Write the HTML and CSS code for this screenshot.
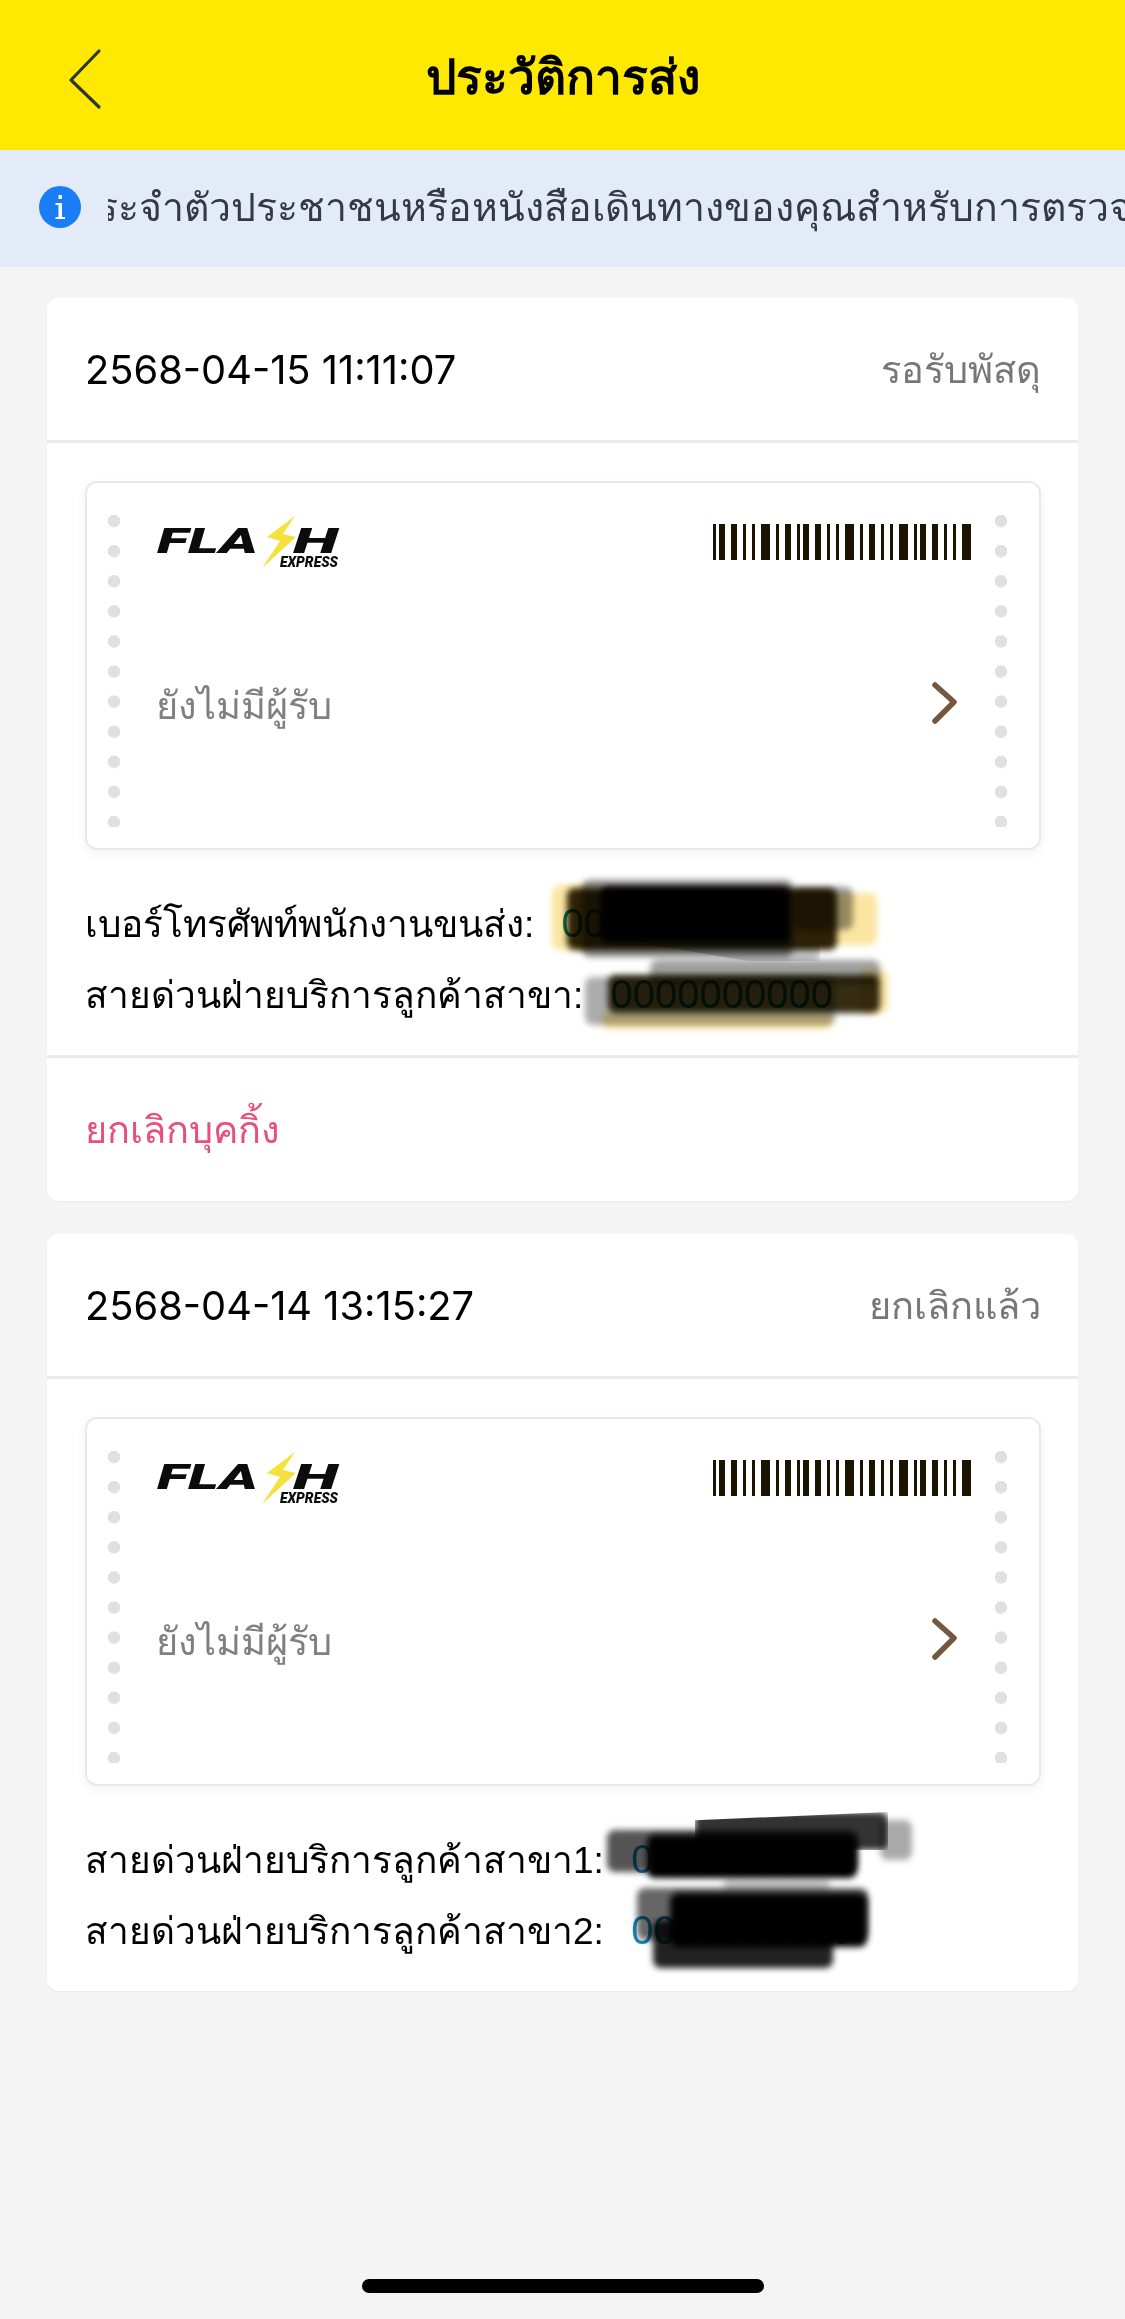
FILE: index.html
```html
<!DOCTYPE html>
<html lang="th">
<head>
    <meta charset="UTF-8">
    <meta name="viewport" content="width=device-width, initial-scale=1.0">
    <title>ประวัติการส่ง</title>
    <link rel="stylesheet" href="styles.css">
</head>
<body>
    <svg class="defs" width="0" height="0">
        <symbol id="logo" viewBox="0 0 184 56">
            <text class="logo-big" x="1" y="38" textLength="101" lengthAdjust="spacingAndGlyphs">FLA</text>
            <text class="logo-big" x="137" y="38" textLength="45" lengthAdjust="spacingAndGlyphs">H</text>
            <polygon points="139,1 111,22 124,26 106,53 140,22 127,19" fill="#f5e13c"/>
            <text class="logo-small" x="124" y="52" textLength="58" lengthAdjust="spacingAndGlyphs">EXPRESS</text>
        </symbol>
        <symbol id="barcode" viewBox="0 0 86 12">
            <path fill="#1a1400" d="M0 0h1v12h-1zM2 0h2v12h-2zM6 0h2v12h-2zM10 0h1v12h-1zM13 0h1v12h-1zM16 0h3v12h-3zM21 0h1v12h-1zM24 0h2v12h-2zM28 0h1v12h-1zM30 0h2v12h-2zM34 0h2v12h-2zM38 0h1v12h-1zM41 0h1v12h-1zM44 0h3v12h-3zM49 0h1v12h-1zM52 0h2v12h-2zM56 0h1v12h-1zM59 0h1v12h-1zM62 0h3v12h-3zM67 0h1v12h-1zM69 0h2v12h-2zM73 0h2v12h-2zM77 0h1v12h-1zM80 0h1v12h-1zM83 0h3v12h-3z"/>
        </symbol>
    </svg>

    <header class="topbar">
        <svg class="back" width="36" height="64" viewBox="0 0 36 64"><path d="M32 4 L4 33 L32 60" fill="none" stroke="#333" stroke-width="3.2" stroke-linecap="round" stroke-linejoin="round"/></svg>
        <h1>ประวัติการส่ง</h1>
    </header>

    <div class="notice">
        <svg class="info" width="42" height="42" viewBox="0 0 42 42">
            <circle cx="21" cy="21" r="21" fill="#1a7df5"/>
            <path d="M16.500 17h6.500v14h3v2h-9.500v-2h3v-12h-3z M19.500 9h3.500v4h-3.500z" fill="#fff"/>
        </svg>
        <div class="notice-clip"><span class="notice-text">บัตรประจำตัวประชาชนหรือหนังสือเดินทางของคุณสำหรับการตรวจสอบ</span></div>
    </div>

    <main class="list">
        <section class="card">
            <div class="card-head">
                <span class="time">2568-04-15 11:11:07</span>
                <span class="status">รอรับพัสดุ</span>
            </div>
            <div class="card-body">
                <div class="ticket">
                    <div class="dots"></div>
                    <div class="ticket-main">
                        <div class="ticket-top">
                            <svg class="logo"><use href="#logo"/></svg>
                            <svg class="barcode"><use href="#barcode"/></svg>
                        </div>
                        <div class="ticket-row">
                            <span class="receiver">ยังไม่มีผู้รับ</span>
                            <svg class="chevron" width="28" height="44" viewBox="0 0 28 44"><path d="M4 4 L23 21 L4 40" fill="none" stroke="#75563f" stroke-width="5.500" stroke-linecap="round" stroke-linejoin="round"/></svg>
                        </div>
                    </div>
                    <div class="dots"></div>
                </div>
                <div class="contacts">
                    <p>เบอร์โทรศัพท์พนักงานขนส่ง: <span class="phone teal">0000000000</span></p>
                    <p>สายด่วนฝ่ายบริการลูกค้าสาขา: <span class="phone teal">0000000000</span></p>
                </div>
            </div>
            <div class="card-foot">ยกเลิกบุคกิ้ง</div>
        </section>

        <section class="card">
            <div class="card-head">
                <span class="time">2568-04-14 13:15:27</span>
                <span class="status">ยกเลิกแล้ว</span>
            </div>
            <div class="card-body">
                <div class="ticket">
                    <div class="dots"></div>
                    <div class="ticket-main">
                        <div class="ticket-top">
                            <svg class="logo"><use href="#logo"/></svg>
                            <svg class="barcode"><use href="#barcode"/></svg>
                        </div>
                        <div class="ticket-row">
                            <span class="receiver">ยังไม่มีผู้รับ</span>
                            <svg class="chevron" width="28" height="44" viewBox="0 0 28 44"><path d="M4 4 L23 21 L4 40" fill="none" stroke="#75563f" stroke-width="5.500" stroke-linecap="round" stroke-linejoin="round"/></svg>
                        </div>
                    </div>
                    <div class="dots"></div>
                </div>
                <div class="contacts">
                    <p>สายด่วนฝ่ายบริการลูกค้าสาขา1: <span class="phone blue">0000000000</span></p>
                    <p>สายด่วนฝ่ายบริการลูกค้าสาขา2: <span class="phone blue">0000000000</span></p>
                </div>
            </div>
        </section>
    </main>

    <!-- marker scribbles over the phone numbers -->
    <div class="scribbles">
        <i class="mark a1"></i><i class="mark a2"></i><i class="mark a3"></i><i class="mark a4"></i><i class="mark a5"></i><i class="mark a6"></i><i class="mark a7"></i>
        <i class="mark b1"></i><i class="mark b2"></i><i class="mark b3"></i><i class="mark b4"></i><i class="mark b5"></i>
        <i class="mark c1"></i><i class="mark c2"></i><i class="mark c3"></i><i class="mark c4"></i>
        <i class="mark d1"></i><i class="mark d2"></i><i class="mark d3"></i><i class="mark d4"></i>
    </div>

    <div class="home-bar"></div>
</body>
</html>
```

FILE: styles.css
```css
* {
    box-sizing: border-box;
}

html, body {
    margin: 0;
    height: 2319px;
    overflow: hidden;
}

body {
    position: relative;
    background-color: #f4f4f4;
    color: #000;
    font-family: 'Liberation Sans', 'Noto Sans', 'DejaVu Sans', sans-serif;
}

.defs {
    position: absolute;
}

.topbar {
    height: 150px;
    padding-top: 4px;
    background-color: #ffe900;
    display: flex;
    align-items: center;
    justify-content: center;
    position: relative;
}

.topbar h1 {
    margin: 0;
    font-size: 48px;
    font-weight: 700;
}

.back {
    position: absolute;
    left: 67px;
    top: 47px;
}

.notice {
    height: 117px;
    padding-bottom: 3px;
    background-color: #e3ebf9;
    display: flex;
    align-items: center;
    padding-left: 39px;
    gap: 27px;
}

.info {
    flex: none;
}

.notice-clip {
    flex: 1;
    overflow: hidden;
}

.notice-text {
    display: block;
    white-space: nowrap;
    margin-left: -107px;
    font-size: 39.2px;
    color: #333a44;
}

.list {
    padding: 31px 47px 0 47px;
    display: flex;
    flex-direction: column;
    gap: 33px;
}

.card {
    background: #fff;
    border-radius: 12px;
    box-shadow: 0 1px 2px rgba(0, 0, 0, 0.04);
}

.card-head {
    height: 145px;
    padding: 0 37px 0 38px;
    display: flex;
    align-items: center;
    justify-content: space-between;
    border-bottom: 3px solid #ebebeb;
}

.time {
    font-family: Inter, 'Liberation Sans', sans-serif;
    font-size: 39.8px;
}

.status {
    font-size: 38px;
    color: #777;
}

.card-body {
    padding: 38px 37px 0 38px;
}

.ticket {
    height: 369px;
    border: 2px solid #e9e9e9;
    border-radius: 12px;
    background: #fff;
    box-shadow: 0 4px 12px rgba(0, 0, 0, 0.05);
    display: flex;
    justify-content: space-between;
    padding: 0 32px 0 21px;
}

.dots {
    flex: none;
    width: 12px;
    margin-top: 32px;
    height: 312px;
    background-image: radial-gradient(circle at 6px 6px, #e0e0e0 6px, transparent 6.5px);
    background-size: 12px 30.1px;
    background-repeat: repeat-y;
}

.ticket-main {
    flex: 1;
    padding: 32px 24px 0 36px;
}

.ticket-top {
    display: flex;
    justify-content: space-between;
    align-items: flex-start;
}

.logo {
    width: 184px;
    height: 56px;
}

.logo-big {
    font-family: Roboto, sans-serif;
    font-weight: 900;
    font-style: italic;
    font-size: 35px;
    fill: #0c0c0c;
}

.logo-small {
    font-family: Roboto, sans-serif;
    font-weight: 900;
    font-style: italic;
    font-size: 14px;
    fill: #0c0c0c;
}

.barcode {
    width: 258px;
    height: 36px;
    margin-top: 9px;
}

.ticket-row {
    display: flex;
    justify-content: space-between;
    align-items: center;
    margin-top: 104px;
    padding-right: 12px;
}

.chevron {
    margin-top: -6px;
}

.receiver {
    font-size: 38px;
    color: #808080;
}

.contacts {
    padding: 38px 0 25px;
    font-size: 37px;
}

.contacts p {
    margin: 0;
    height: 71px;
    line-height: 71px;
    white-space: nowrap;
}

.phone {
    margin-left: 17px;
    font-size: 40px;
}

.teal {
    color: #0f7f80;
}

.blue {
    color: #1a8cbd;
}

.card-foot {
    height: 146px;
    padding: 0 38px;
    display: flex;
    align-items: center;
    border-top: 3px solid #ebebeb;
    font-size: 38px;
    color: #e8507c;
}

.scribbles {
    position: absolute;
    inset: 0;
    pointer-events: none;
}

.mark {
    position: absolute;
    display: block;
    filter: blur(3px);
    border-radius: 8px;
    mix-blend-mode: multiply;
}

/* first number */
.a1 { left: 552px; top: 885px; width: 40px; height: 65px; background: #fbe5a0; }
.a2 { left: 790px; top: 893px; width: 87px; height: 52px; background: #fbe5a0; }
.a3 { left: 582px; top: 880px; width: 211px; height: 77px; background: #8a8a8a; }
.a4 { left: 793px; top: 887px; width: 60px; height: 43px; background: #9a9a9a; }
.a5 { left: 567px; top: 888px; width: 270px; height: 62px; background: #2e2408; }
.a6 { left: 600px; top: 887px; width: 190px; height: 56px; background: #000; }
.a7 { left: 640px; top: 943px; width: 180px; height: 18px; background: #c4c4c4; clip-path: polygon(0 0, 100% 0, 100% 100%, 60% 100%); }

/* second number */
.b1 { left: 650px; top: 960px; width: 230px; height: 24px; background: #a0a0a0; }
.b2 { left: 585px; top: 977px; width: 250px; height: 48px; background: #acacac; }
.b3 { left: 602px; top: 1012px; width: 231px; height: 17px; background: #fbe5a0; }
.b4 { left: 860px; top: 970px; width: 28px; height: 43px; background: #fbe5a0; }
.b5 { left: 608px; top: 975px; width: 272px; height: 38px; background: #352d12; }

/* third number */
.c1 { left: 607px; top: 1830px; width: 250px; height: 42px; background: #555; }
.c2 { left: 695px; top: 1812px; width: 193px; height: 38px; background: #333; clip-path: polygon(0 22%, 100% 0, 100% 100%, 0 100%); }
.c3 { left: 880px; top: 1820px; width: 32px; height: 40px; background: #aaa; }
.c4 { left: 647px; top: 1835px; width: 210px; height: 43px; background: #000; }

/* fourth number */
.d1 { left: 723px; top: 1878px; width: 107px; height: 14px; background: #c8c8c8; }
.d2 { left: 637px; top: 1888px; width: 231px; height: 52px; background: #666; }
.d3 { left: 670px; top: 1893px; width: 197px; height: 54px; background: #000; }
.d4 { left: 653px; top: 1920px; width: 180px; height: 48px; background: #222; }

.home-bar {
    position: absolute;
    left: 362px;
    bottom: 26px;
    width: 402px;
    height: 14px;
    border-radius: 7px;
    background: #000;
}
```
